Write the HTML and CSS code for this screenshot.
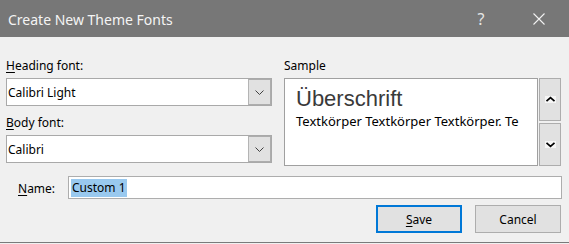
FILE: index.html
```html
<!DOCTYPE html>
<html lang="de">
<head>
<meta charset="utf-8">
<title>Create New Theme Fonts</title>
<link rel="stylesheet" href="styles.css">
</head>
<body>
<div class="dialog">
  <div class="titlebar">
    <span class="title">Create New Theme Fonts</span>
    <span class="cap-btn help">?</span>
    <span class="cap-btn close">
      <svg width="12" height="12" viewBox="0 0 12 12"><path d="M0.5 0.5 L11.5 11.5 M11.5 0.5 L0.5 11.5" stroke="#f2f2f2" stroke-width="1.1" fill="none"/></svg>
    </span>
  </div>
  <div class="main">
    <div class="col-left">
      <div class="label"><u>H</u>eading font:</div>
      <div class="combo">
        <span class="combo-text">Calibri Light</span>
        <span class="combo-btn"><svg width="9" height="5" viewBox="0 0 9 5"><polyline points="0.5,0.5 4.5,4.5 8.5,0.5" stroke="#404040" stroke-width="1" fill="none"/></svg></span>
      </div>
      <div class="label label-body"><u>B</u>ody font:</div>
      <div class="combo">
        <span class="combo-text">Calibri</span>
        <span class="combo-btn"><svg width="9" height="5" viewBox="0 0 9 5"><polyline points="0.5,0.5 4.5,4.5 8.5,0.5" stroke="#404040" stroke-width="1" fill="none"/></svg></span>
      </div>
    </div>
    <div class="col-right">
      <div class="label">Sample</div>
      <div class="sample-row">
        <div class="sample">
          <div class="sample-head">Überschrift</div>
          <div class="sample-body">Textkörper Textkörper Textkörper. Te</div>
        </div>
        <div class="scroll">
          <span class="scroll-btn"><svg width="11" height="7" viewBox="0 0 11 7"><rect width="11" height="7" fill="#f6f6f6"/><polyline points="1.5,5.2 5.5,1.6 9.5,5.2" stroke="#000" stroke-width="1.7" fill="none"/></svg></span>
          <span class="scroll-btn"><svg width="11" height="7" viewBox="0 0 11 7"><rect width="11" height="7" fill="#f6f6f6"/><polyline points="1.5,1.8 5.5,5.4 9.5,1.8" stroke="#000" stroke-width="1.7" fill="none"/></svg></span>
        </div>
      </div>
    </div>
  </div>
  <div class="name-row">
    <span class="name-label"><u>N</u>ame:</span>
    <div class="name-input"><span class="sel">Custom 1</span></div>
  </div>
  <div class="buttons">
    <span class="btn btn-default"><u>S</u>ave</span>
    <span class="btn">Cancel</span>
  </div>
</div>
</body>
</html>
```
FILE: styles.css
```css
html, body {
  margin: 0;
  padding: 0;
  background: #f0f0f0;
}
body {
  width: 569px;
  height: 244px;
  overflow: hidden;
  font-family: "Noto Sans", "Open Sans", sans-serif;
  font-size: 12px;
  color: #000;
}
.dialog {
  box-sizing: border-box;
  width: 569px;
  height: 243px;
  border-bottom: 1px solid #7a7a7a;
  background: #f0f0f0;
}
.titlebar {
  height: 37px;
  background: #777777;
  display: flex;
  align-items: center;
  padding-left: 8px;
  color: #f4f4f4;
}
.title {
  font-size: 14px;
  padding-top: 2px;
  flex: 1;
}
.cap-btn {
  width: 46px;
  height: 37px;
  display: flex;
  align-items: center;
  justify-content: center;
}
.help {
  font-size: 16px;
  color: #e6e6e6;
  margin-right: 12px;
  padding-top: 1px;
  box-sizing: border-box;
}
.close {
  margin-right: 7px;
}
.main {
  display: grid;
  grid-template-columns: 266px 277px;
  column-gap: 12px;
  padding: 21px 0 0 6px;
}
.label {
  line-height: 16px;
  margin-bottom: 4px;
  color: #000;
}
.label-body {
  margin-top: 9px;
}
u {
  text-decoration: underline;
  text-underline-offset: 2px;
}
.combo {
  box-sizing: border-box;
  height: 28px;
  display: flex;
  border: 1px solid #a9a9a9;
  background: #fff;
}
.combo-text {
  flex: 1;
  display: flex;
  align-items: center;
  padding-left: 1px;
  padding-top: 1px;
}
.combo-btn {
  box-sizing: border-box;
  width: 23px;
  background: #e1e1e1;
  border: 1px solid #adadad;
  border-left: 1px solid #b4b4b4;
  display: flex;
  align-items: center;
  justify-content: center;
  margin: 0;
}
.sample-row {
  display: flex;
  gap: 1px;
  height: 88px;
}
.sample {
  box-sizing: border-box;
  width: 254px;
  height: 88px;
  border: 1px solid #a0a0a0;
  background: #fff;
  padding: 9px 0 0 11px;
  overflow: hidden;
  white-space: nowrap;
}
.sample-head {
  font-family: "Liberation Sans", Arial, sans-serif;
  font-size: 22px;
  line-height: 22px;
  font-weight: 300;
  color: #3a3a3a;
}
.sample-body {
  font-size: 13px;
  line-height: 16px;
  margin-top: 3px;
}
.scroll {
  display: flex;
  flex-direction: column;
  gap: 2px;
}
.scroll-btn {
  box-sizing: border-box;
  width: 22px;
  height: 43px;
  background: #e1e1e1;
  border: 1px solid #adadad;
  display: flex;
  align-items: center;
  justify-content: center;
}
.name-row {
  display: flex;
  align-items: center;
  margin-top: 10px;
  padding-left: 18px;
}
.name-label {
  width: 50px;
  padding-top: 2px;
}
.name-input {
  box-sizing: border-box;
  width: 494px;
  height: 23px;
  border: 1px solid #adadad;
  background: #fff;
  display: flex;
  align-items: center;
  padding-left: 2px;
}
.sel {
  background: #99c9ef;
  line-height: 18px;
  padding: 0 1px;
}
.buttons {
  display: flex;
  justify-content: flex-end;
  gap: 13px;
  margin-top: 6px;
  padding-right: 8px;
}
.btn {
  box-sizing: border-box;
  width: 86px;
  height: 28px;
  background: #e1e1e1;
  border: 1px solid #adadad;
  display: flex;
  align-items: center;
  justify-content: center;
  padding-top: 1px;
}
.btn-default {
  border: 2px solid #0078d7;
}
```
